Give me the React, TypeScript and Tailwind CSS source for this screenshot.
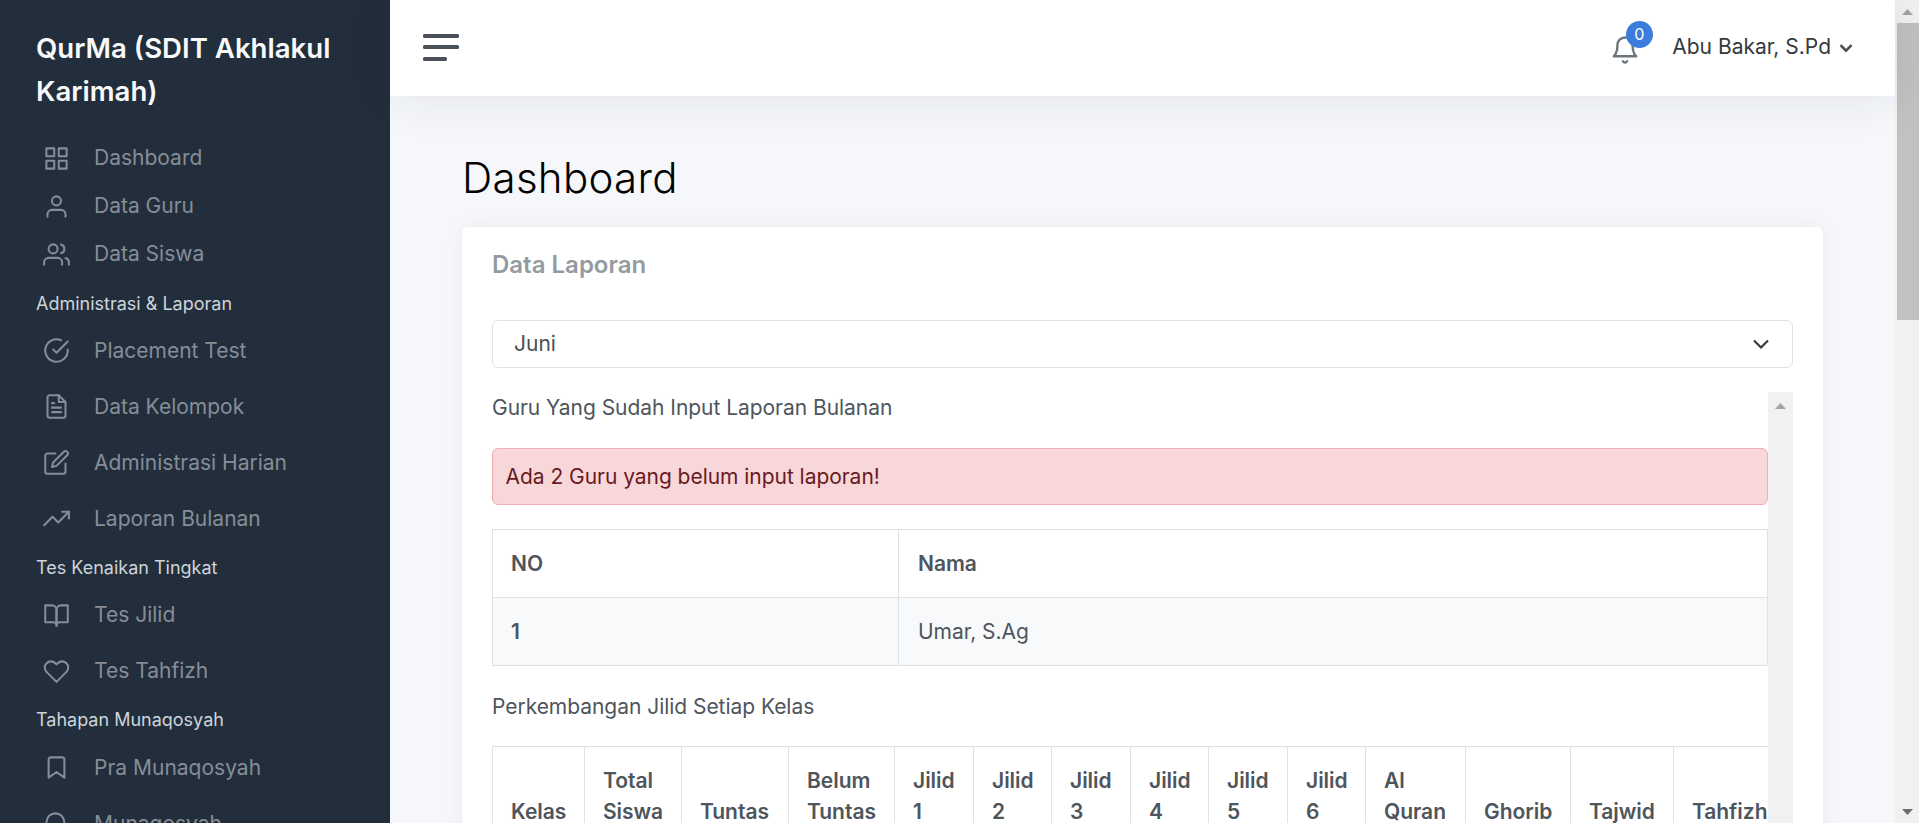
import {
  FiGrid,
  FiUser,
  FiUsers,
  FiCheckCircle,
  FiFileText,
  FiEdit,
  FiTrendingUp,
  FiBookOpen,
  FiHeart,
  FiBookmark,
  FiSearch,
  FiBell,
} from 'react-icons/fi';
import type { IconType } from 'react-icons';

function NavItem({ icon: Icon, label, short }: { icon: IconType; label: string; short?: boolean }) {
  return (
    <div className={`flex items-center pl-[43px] text-[21px] text-[#868d96] ${short ? 'h-[48px]' : 'h-[56px]'}`}>
      <Icon className="w-[27px] h-[27px] shrink-0 stroke-[1.8]" />
      <span className="ml-[24px] leading-[31.5px] whitespace-nowrap">{label}</span>
    </div>
  );
}

function NavHeader({ label, first }: { label: string; first?: boolean }) {
  return (
    <div className={`pl-[36px] text-[18px] leading-[27px] text-[#ced4da] ${first ? 'pt-[11.5px] pb-[6px]' : 'pt-[7px] pb-[6.5px]'}`}>
      {label}
    </div>
  );
}

function Sidebar() {
  return (
    <aside className="w-[390px] shrink-0 h-full overflow-hidden bg-[#222e3c]">
      <div className="h-[134px] pt-[27px] pl-[36px] pr-[36px] text-[27.6px] leading-[43px] font-semibold text-[#f8f9fa]">
        QurMa (SDIT Akhlakul Karimah)
      </div>
      <NavItem icon={FiGrid} label="Dashboard" short />
      <NavItem icon={FiUser} label="Data Guru" short />
      <NavItem icon={FiUsers} label="Data Siswa" short />
      <NavHeader label="Administrasi & Laporan" first />
      <NavItem icon={FiCheckCircle} label="Placement Test" />
      <NavItem icon={FiFileText} label="Data Kelompok" />
      <NavItem icon={FiEdit} label="Administrasi Harian" />
      <NavItem icon={FiTrendingUp} label="Laporan Bulanan" />
      <NavHeader label="Tes Kenaikan Tingkat" />
      <NavItem icon={FiBookOpen} label="Tes Jilid" />
      <NavItem icon={FiHeart} label="Tes Tahfizh" />
      <NavHeader label="Tahapan Munaqosyah" />
      <NavItem icon={FiBookmark} label="Pra Munaqosyah" />
      <NavItem icon={FiSearch} label="Munaqosyah" />
    </aside>
  );
}

function Navbar() {
  return (
    <header className="relative z-10 h-[96px] shrink-0 flex items-center bg-white pl-[33px] pr-[42px] shadow-[0_0_48px_0_rgba(33,37,41,0.1)]">
      <div className="flex flex-col gap-[7.5px] -mt-[2px]">
        <div className="w-[36px] h-[4px] rounded-[1.5px] bg-[#495057]" />
        <div className="w-[36px] h-[4px] rounded-[1.5px] bg-[#495057]" />
        <div className="w-[24px] h-[4px] rounded-[1.5px] bg-[#495057]" />
      </div>
      <div className="ml-auto relative mr-[32px] mt-[4px]">
        <FiBell className="w-[30px] h-[30px] text-[#6c757d] stroke-[1.9]" />
        <span className="absolute -top-[14px] left-[15.5px] w-[27px] h-[27px] rounded-full bg-[#3b7ddd] text-white text-[16px] leading-[27px] text-center">
          0
        </span>
      </div>
      <span className="-mt-[2px] text-[21px] leading-[31.5px] text-[#343a40] whitespace-nowrap">Abu Bakar, S.Pd</span>
      <svg className="ml-[8px] -mt-[1px]" width="14" height="10" viewBox="0 0 14 10" fill="none">
        <path d="M1.5 2.2l5.5 5.5 5.5-5.5" stroke="#495057" strokeWidth="2.6" />
      </svg>
    </header>
  );
}

function ArrowUp({ className }: { className?: string }) {
  return (
    <svg className={className} width="11" height="6" viewBox="0 0 11 6">
      <path d="M5.5 0L11 6H0z" fill="#a3a3a3" />
    </svg>
  );
}

function ArrowDown({ className }: { className?: string }) {
  return (
    <svg className={className} width="11" height="6" viewBox="0 0 11 6">
      <path d="M0 0h11L5.5 6z" fill="#6e6e6e" />
    </svg>
  );
}

function PageScrollbar() {
  return (
    <div className="w-[24px] shrink-0 h-full bg-[#f1f1f1] flex flex-col">
      <div className="h-[23px] flex items-center justify-center pl-[1px]">
        <ArrowUp />
      </div>
      <div className="ml-[2px] h-[297px] bg-[#c1c1c1]" />
      <div className="mt-auto h-[23px] flex items-center justify-center pl-[1px]">
        <ArrowDown />
      </div>
    </div>
  );
}

const headers: [string, string][] = [
  ['Kelas', 'w-[92px]'],
  ['Total Siswa', 'w-[97px]'],
  ['Tuntas', 'w-[107px]'],
  ['Belum Tuntas', 'w-[106px]'],
  ['Jilid 1', 'w-[79px]'],
  ['Jilid 2', 'w-[78px]'],
  ['Jilid 3', 'w-[79px]'],
  ['Jilid 4', 'w-[78px]'],
  ['Jilid 5', 'w-[79px]'],
  ['Jilid 6', 'w-[78px]'],
  ['Al Quran', 'w-[100px]'],
  ['Ghorib', 'w-[105px]'],
  ['Tajwid', 'w-[103px]'],
  ['Tahfizh', 'w-[115px]'],
];

function Card() {
  return (
    <section className="bg-white rounded-[6px] shadow-[0_0_21px_0_rgba(33,37,41,0.05)] px-[30px] pt-[23px] h-[700px]">
      <h5 className="text-[24px] leading-[30px] font-semibold text-[#939ba2]">Data Laporan</h5>
      <div className="mt-[40px] h-[48px] flex items-center justify-between border-[1.5px] border-[#dee2e6] rounded-[6px] pl-[21px] pr-[22px] text-[21px] text-[#495057]">
        <span>Juni</span>
        <svg width="18" height="12" viewBox="0 0 18 12" fill="none">
          <path d="M2 2.5l7 7 7-7" stroke="#343a40" strokeWidth="2.2" />
        </svg>
      </div>
      <div className="mt-[24px] flex h-[500px] text-[21px] leading-[31.5px] text-[#4e555c] tracking-[-0.04px]">
        <div className="flex-1 min-w-0 overflow-hidden">
          <p>Guru Yang Sudah Input Laporan Bulanan</p>
          <div className="mt-[24px] border-[1.5px] border-[#f1aeb5] bg-[#f8d7da] rounded-[6px] pl-[12.5px] pr-[15px] py-[12px] text-[#6a1a21]">
            Ada 2 Guru yang belum input laporan!
          </div>
          <table className="mt-[24px] w-full table-fixed border-collapse">
            <tbody>
              <tr>
                <th className="w-[406px] border-[1.5px] border-[#dee2e6] px-[18px] py-[17.5px] text-left font-[570]">NO</th>
                <th className="border-[1.5px] border-[#dee2e6] px-[19px] py-[17.5px] text-left font-[570]">Nama</th>
              </tr>
              <tr className="bg-[#f8f9fa]">
                <td className="border-[1.5px] border-[#dee2e6] px-[18px] py-[18px] font-[570]">1</td>
                <td className="border-[1.5px] border-[#dee2e6] px-[19px] py-[18px]">Umar, S.Ag</td>
              </tr>
            </tbody>
          </table>
          <p className="mt-[25px]">Perkembangan Jilid Setiap Kelas</p>
          <table className="mt-[23px] table-fixed border-collapse w-[1297px]">
            <thead>
              <tr>
                {headers.map(([label, width]) => (
                  <th
                    key={label}
                    className={`${width} border-[1.5px] border-[#dee2e6] pl-[18px] pr-[14px] py-[18px] text-left align-bottom font-[570]`}
                  >
                    {label}
                  </th>
                ))}
              </tr>
            </thead>
          </table>
        </div>
        <div className="w-[25px] shrink-0 bg-[#f1f1f1] pt-[11px] flex justify-center self-stretch">
          <ArrowUp />
        </div>
      </div>
    </section>
  );
}

export default function App() {
  return (
    <div className="h-screen overflow-hidden flex bg-[#f5f7fb] font-['Inter',sans-serif] font-[380]">
      <Sidebar />
      <div className="flex-1 min-w-0 flex flex-col">
        <Navbar />
        <main className="px-[72px] pt-[57px]">
          <h1 className="text-[42px] leading-[50px] font-[360] tracking-[0.3px] text-black mb-[24px]">Dashboard</h1>
          <Card />
        </main>
      </div>
      <PageScrollbar />
    </div>
  );
}
